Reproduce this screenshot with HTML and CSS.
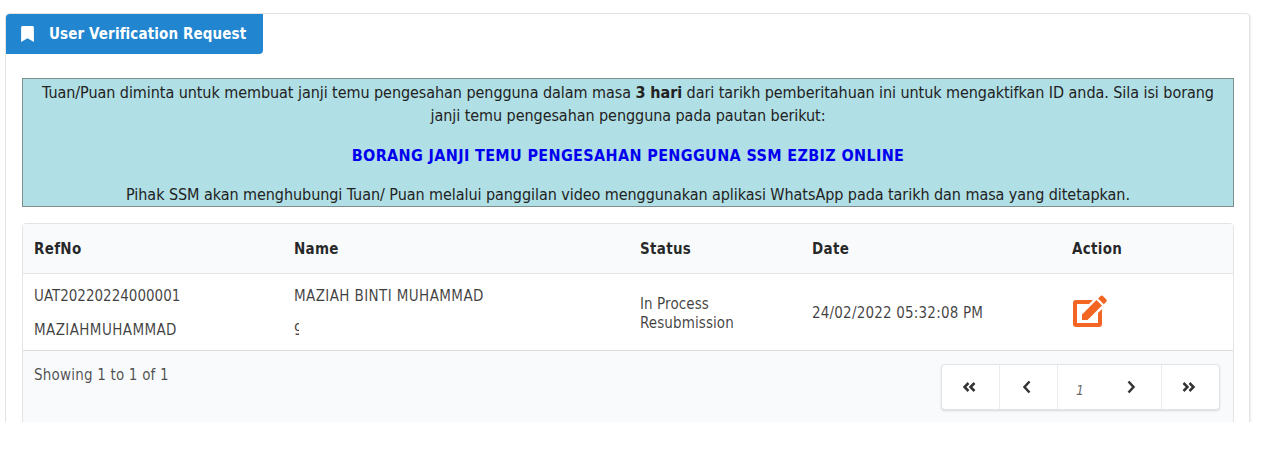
FILE: index.html
```html
<!DOCTYPE html>
<html lang="ms">
<head>
<meta charset="utf-8">
<title>User Verification Request</title>
<link rel="stylesheet" href="styles.css">
</head>
<body>
<div class="viewport">
  <section class="card">
    <h2 class="tab">
      <svg class="tab-icon" viewBox="0 0 12 15" width="13" height="16"><path d="M0 1.400C0 .6.6 0 1.400 0h9.200c.8 0 1.400.6 1.400 1.400V15L6 11.500 0 15z" fill="#fff"/></svg>
      <span>User Verification Request</span>
    </h2>
    <div class="notice">
      <p class="notice-intro">Tuan/Puan diminta untuk membuat janji temu pengesahan pengguna dalam masa <b>3 hari</b> dari tarikh pemberitahuan ini untuk mengaktifkan ID anda. Sila isi borang janji temu pengesahan pengguna pada pautan berikut:</p>
      <p class="notice-link"><a href="#">BORANG JANJI TEMU PENGESAHAN PENGGUNA SSM EZBIZ ONLINE</a></p>
      <p>Pihak SSM akan menghubungi Tuan/ Puan melalui panggilan video menggunakan aplikasi WhatsApp pada tarikh dan masa yang ditetapkan.</p>
    </div>
    <div class="table-box">
      <table class="grid">
        <thead>
          <tr><th class="c1">RefNo</th><th class="c2">Name</th><th class="c3">Status</th><th class="c4">Date</th><th>Action</th></tr>
        </thead>
        <tbody>
          <tr>
            <td><div class="stack"><span>UAT20220224000001</span><span class="caps">MAZIAHMUHAMMAD</span></div></td>
            <td><div class="stack"><span class="caps">MAZIAH BINTI MUHAMMAD</span><span class="clipped">9</span></div></td>
            <td class="status">In Process<br>Resubmission</td>
            <td class="date">24/02/2022 05:32:08 PM</td>
            <td>
              <svg class="edit" viewBox="0 0 36 33" width="36" height="33"><path d="M4 5h17l-4 4H5v19h21V18l4-4v15a3 3 0 0 1-3 3H4a3 3 0 0 1-3-3V8a3 3 0 0 1 3-3z" fill="#f26522"/><path d="M10 19.500 24.500 5l5.500 5.500L15.500 25H10zM26 3.500l2.300-2.300a2 2 0 0 1 2.800 0l3 3a2 2 0 0 1 0 2.800L31.800 9.300z" fill="#f26522"/></svg>
            </td>
          </tr>
        </tbody>
      </table>
      <div class="foot">
        <span class="count">Showing 1 to 1 of 1</span>
        <nav class="pager">
          <a href="#" class="pg w58 first"><svg viewBox="0 0 13 10" width="13" height="10"><path d="M5.500 1 1.500 5l4 4M11.500 1l-4 4 4 4" class="chev"/></svg></a>
          <a href="#" class="pg w58 prev"><svg viewBox="0 0 10 14" width="10" height="14"><path d="M7.500 1.500 2.500 7l5 5.500" class="chev"/></svg></a>
          <a href="#" class="pg wide"><i>1</i><svg viewBox="0 0 10 14" width="10" height="14"><path d="M2.500 1.500l5 5.500-5 5.500" class="chev"/></svg></a>
          <a href="#" class="pg w58 last"><svg viewBox="0 0 13 10" width="13" height="10"><path d="M1.500 1l4 4-4 4M7.500 1l4 4-4 4" class="chev"/></svg></a>
        </nav>
      </div>
    </div>
  </section>
</div>
</body>
</html>
```
FILE: styles.css
```css
* { box-sizing: border-box; }
html, body { margin: 0; background: #fff; }
body { font-family: "DejaVu Sans Condensed", "DejaVu Sans", sans-serif; font-stretch: condensed; font-size: 15px; color: rgba(0,0,0,.87); }
.viewport { height: 422px; overflow: hidden; padding: 13px 30px 0 5px; }
.card { height: 440px; background: #fff; border: 1px solid #e3e3e5; border-radius: 4px; box-shadow: 1px 1px 2px rgba(0,0,0,.08); padding-bottom: 20px; }
.tab { display: flex; align-items: center; gap: 15px; width: 257px; height: 40px; margin: 0 0 24px; padding-left: 15px; background: #2185d0; color: #fff; border-radius: 4px 0 4px 0; border-bottom-right-radius: 4px; font-size: 15px; font-weight: 700; letter-spacing: .12px; }
.tab-icon { flex: none; }
.notice { margin: 0 15px 0 16px; height: 129px; background: #b0dfe5; border: 1px solid #7f8c8d; text-align: center; padding: 2px 8px 0; font-size: 16px; letter-spacing: -.06px; line-height: 23px; color: #222; }
.notice p { margin: 0 0 16px; }
.notice .notice-intro { margin-bottom: 17px; }
.notice .notice-link { font-weight: 700; letter-spacing: .36px; }
.notice-link a { color: #0000ee; text-decoration: none; }
.table-box { margin: 16px 15px 0 16px; border: 1px solid #e3e4e6; border-radius: 4px; background: #f9fafb; height: 240px; }
.grid { width: 100%; border-collapse: collapse; table-layout: fixed; color: rgba(0,0,0,.75); }
.grid th { height: 49px; text-align: left; padding: 2px 11px 0; font-weight: 700; letter-spacing: .3px; background: #f9fafb; border-bottom: 1px solid #e3e4e6; color: rgba(0,0,0,.85); }
.grid td { height: 77px; padding: 0 11px; background: #fff; vertical-align: middle; border-bottom: 1px solid #d9dbdf; }
.c1 { width: 260px; }
.c2 { width: 346px; }
.c3 { width: 172px; }
.c4 { width: 260px; }
.stack { display: flex; flex-direction: column; gap: 16px; line-height: 18px; padding-top: 3px; }
.caps { letter-spacing: .4px; }
.clipped { display: block; width: 5px; height: 18px; overflow: hidden; color: rgba(0,0,0,.75); }
.grid .status { line-height: 19px; padding-top: 4px; letter-spacing: .1px; }
.grid .date { letter-spacing: .2px; padding-top: 2px; }
.edit { display: block; margin-top: -1px; }
.foot { display: flex; justify-content: space-between; align-items: flex-start; padding: 13px 13px 0 11px; }
.count { line-height: 20px; margin-top: 1px; letter-spacing: .2px; color: rgba(0,0,0,.7); }
.pager { display: flex; width: 279px; height: 46px; background: #fff; border: 1px solid #e3e4e6; border-radius: 4px; box-shadow: 0 1px 2px rgba(34,36,38,.15); }
.pg { display: flex; align-items: center; justify-content: center; border-right: 1px solid #ececee; color: #333; text-decoration: none; }
.w58 { width: 58px; }
.first { padding-right: 2px; }
.prev { padding-right: 4px; }
.wide { width: 104px; padding-left: 18px; justify-content: flex-start; gap: 42px; }
.last { border-right: 0; flex: 1; padding-right: 4px; }
.pg i { font-size: 14px; margin-top: 6px; color: rgba(0,0,0,.6); }
.chev { fill: none; stroke: #333; stroke-width: 2.500; }
```
